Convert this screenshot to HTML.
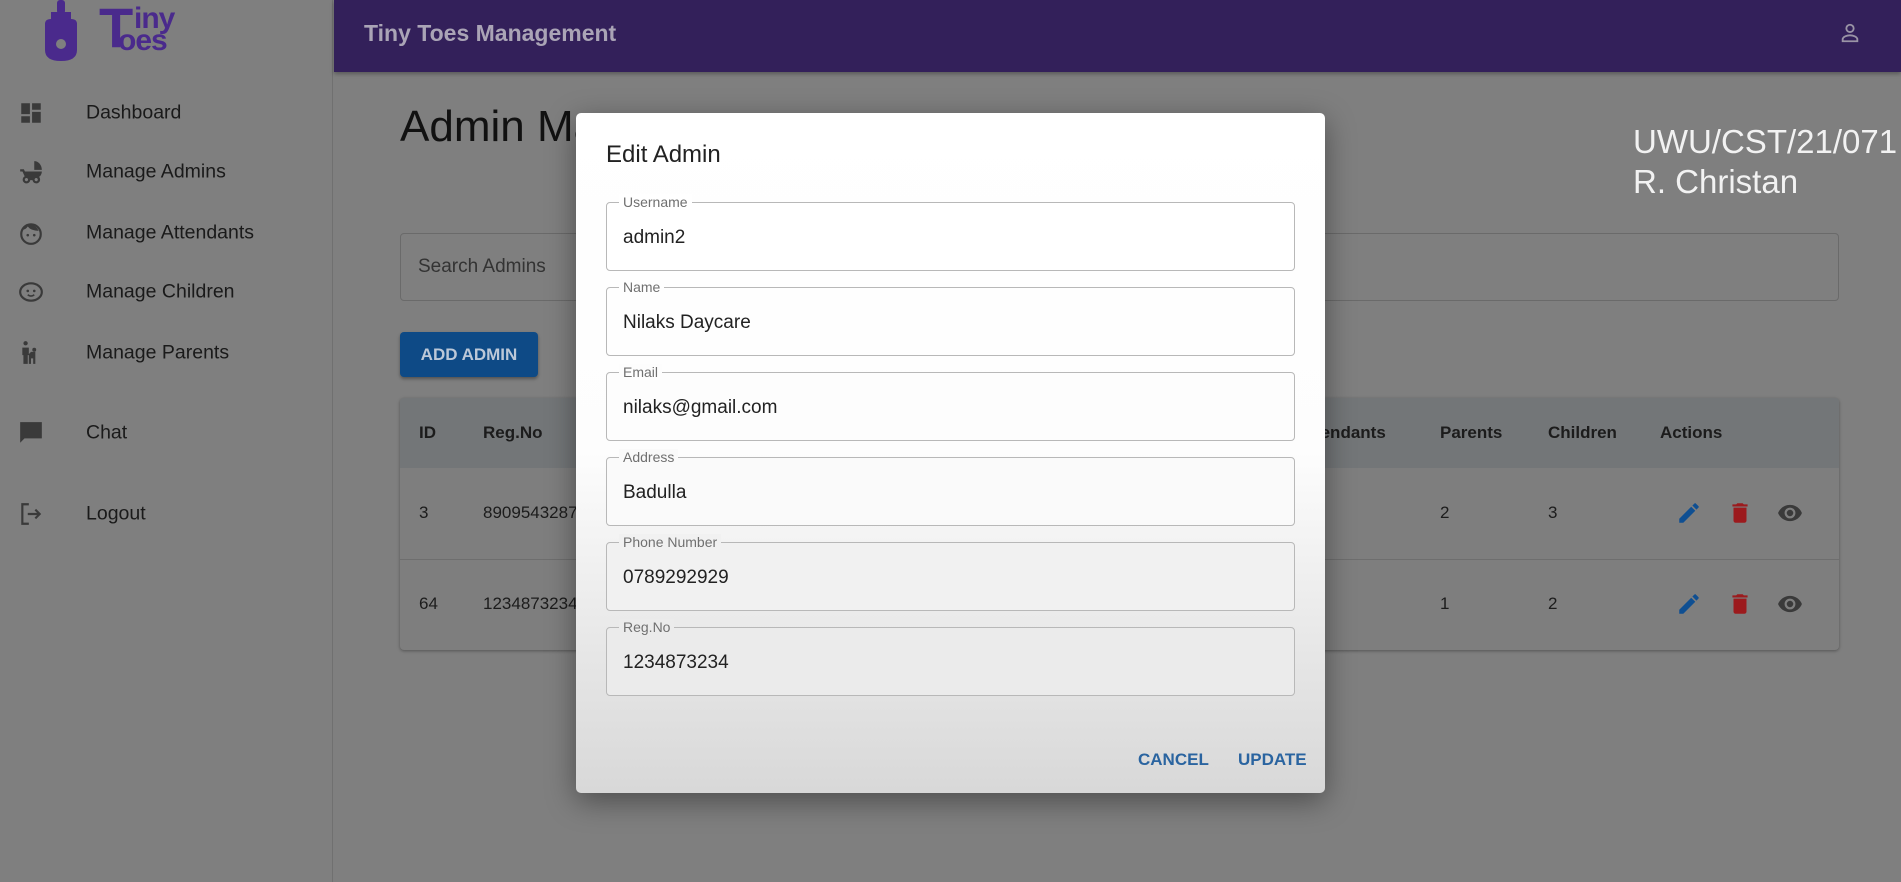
<!DOCTYPE html>
<html><head><meta charset="utf-8"><style>
*{margin:0;padding:0;box-sizing:border-box}
body{width:1901px;height:882px;overflow:hidden;background:#7f7f7f;font-family:"Liberation Sans",sans-serif;position:relative;color:#1c1c1c}
.abs{position:absolute}
.side{left:0;top:0;width:333px;height:882px;background:#7f7f7f;border-right:1px solid #707070}
.nav{position:absolute;left:86px;font-size:19.5px;color:#1a1a1a;transform:translateY(-50%)}
.ic{position:absolute;left:18px;width:26px;height:26px;transform:translateY(-50%)}
.hdr{left:334px;top:0;width:1567px;height:72px;background:#33205a;box-shadow:0 2px 4px rgba(0,0,0,.3)}
.th,.td{position:absolute;font-size:17px;transform:translateY(-50%)}
.th{font-weight:bold;color:#1c1c1c}
.field{position:absolute;left:30px;width:689px;height:69px;border:1px solid #b8b8b8;border-radius:4px}
.field .lb{position:absolute;left:12px;top:-9px;font-size:14px;color:#707070;background:inherit;padding:0 4px;line-height:16px}
.field .v{position:absolute;left:16px;top:24px;font-size:19px;color:#222}
</style></head><body>
<div class="abs side">
  <svg class="abs" style="left:40px;top:0" width="42" height="62" viewBox="0 0 42 62"><rect x="17" y="0" width="8" height="14" rx="3" fill="#4a2a8c"/><rect x="11" y="12" width="20" height="8" fill="#4a2a8c"/><path d="M5 24 Q5 19 11 19 H31 Q37 19 37 24 V50 Q37 61 21 61 Q5 61 5 50Z" fill="#4a2a8c"/><circle cx="21" cy="44" r="5" fill="#7f7f7f"/></svg>
  <div class="abs" style="left:99px;top:0px;font-size:56px;font-weight:bold;color:#4a2a8c;line-height:56px;letter-spacing:-2px">T</div>
  <div class="abs" style="left:134px;top:4px;font-size:30px;font-weight:bold;color:#4a2a8c;line-height:30px;letter-spacing:-1px">iny</div>
  <div class="abs" style="left:118px;top:26px;font-size:30px;font-weight:bold;color:#4a2a8c;line-height:30px;letter-spacing:-1px">oes</div>
  <svg class="ic" style="top:113px" viewBox="0 0 24 24"><path d="M3 13h8V3H3zm0 8h8v-6H3zm10 0h8V11h-8zm0-18v6h8V3z" fill="#3a3a3a"/></svg>
  <div class="nav" style="top:113px">Dashboard</div>
  <svg class="ic" style="top:172px" viewBox="0 0 24 24"><path d="M15 2v8h7c0-4.4-3.1-8-7-8zm5.3 13.9C21.4 14.6 22 13.1 22 11.5H6.4l-1-2H2v2h2.1s1.9 4 2.1 4.4c-1.1.6-1.9 1.8-1.9 3.1 0 1.9 1.6 3.5 3.5 3.5 1.8 0 3.2-1.2 3.5-3h2.1c.3 1.7 1.700 3 3.5 3 1.9 0 3.5-1.6 3.5-3.5 0-1-.4-1.9-1-2.6zM7.8 20.5c-.8 0-1.5-.7-1.5-1.5s.7-1.5 1.5-1.5 1.5.7 1.5 1.5-.7 1.5-1.5 1.5zm9 0c-.8 0-1.5-.7-1.5-1.5s.7-1.5 1.5-1.5 1.5.7 1.5 1.5-.7 1.5-1.5 1.5z" fill="#3a3a3a"/></svg>
  <div class="nav" style="top:172px">Manage Admins</div>
  <svg class="ic" style="top:233px" viewBox="0 0 24 24"><circle cx="12" cy="13" r="9" fill="none" stroke="#3a3a3a" stroke-width="2"/><path d="M4 9 Q6 3 12 4 Q17 5 19 10 Q12 10 9 6 Q7 9 4 9z" fill="#3a3a3a"/><circle cx="9" cy="14" r="1.2" fill="#3a3a3a"/><circle cx="15" cy="14" r="1.2" fill="#3a3a3a"/></svg>
  <div class="nav" style="top:233px">Manage Attendants</div>
  <svg class="ic" style="top:292px" viewBox="0 0 24 24"><ellipse cx="12" cy="12" rx="10" ry="8" fill="none" stroke="#3a3a3a" stroke-width="2"/><circle cx="9" cy="11" r="1.2" fill="#3a3a3a"/><circle cx="15" cy="11" r="1.2" fill="#3a3a3a"/><path d="M9 14.5q3 2.5 6 0" fill="none" stroke="#3a3a3a" stroke-width="1.5"/></svg>
  <div class="nav" style="top:292px">Manage Children</div>
  <svg class="ic" style="top:353px" viewBox="0 0 24 24"><circle cx="7" cy="3" r="2" fill="#3a3a3a"/><path d="M4 7h6v6l2-2h4v11h-2v-5h-2v5h-2V14H9v8H5V14H4z" fill="#3a3a3a"/><circle cx="15" cy="9" r="1.8" fill="#3a3a3a"/></svg>
  <div class="nav" style="top:353px">Manage Parents</div>
  <svg class="ic" style="top:433px" viewBox="0 0 24 24"><path d="M2 2h20v15H6l-4 4z" fill="#3a3a3a"/></svg>
  <div class="nav" style="top:433px">Chat</div>
  <svg class="ic" style="top:514px" viewBox="0 0 24 24"><path d="M10 3H4v18h6M9 12h11M16 8l4 4-4 4" fill="none" stroke="#3a3a3a" stroke-width="2"/></svg>
  <div class="nav" style="top:514px">Logout</div>
</div>
<div class="abs hdr">
  <div class="abs" style="left:30px;top:20px;font-size:23px;font-weight:bold;color:#aaa4b6">Tiny Toes Management</div>
  <svg class="abs" style="left:1505px;top:22px" width="22" height="22" viewBox="0 0 24 24"><circle cx="12" cy="7" r="4" fill="none" stroke="#9a94a6" stroke-width="2"/><path d="M4 21v-2c0-3 5-4.5 8-4.5s8 1.5 8 4.5v2z" fill="none" stroke="#9a94a6" stroke-width="2"/></svg>
</div>
<div class="abs" style="left:400px;top:102px;font-size:44px;color:#111">Admin Management</div>
<div class="abs" style="left:1633px;top:122px;font-size:33px;color:#f2f2f2;line-height:40px">UWU/CST/21/071<br>R. Christan</div>
<div class="abs" style="left:400px;top:233px;width:1439px;height:68px;border:1px solid #6a6a6a;border-radius:4px"><div class="abs" style="left:17px;top:22px;font-size:19px;color:#333">Search Admins</div></div>
<div class="abs" style="left:400px;top:332px;width:138px;height:45px;background:#0e4a86;border-radius:4px;box-shadow:0 2px 3px rgba(0,0,0,.35);color:#bcc8d8;font-size:17px;font-weight:bold;text-align:center;line-height:45px">ADD ADMIN</div>
<div class="abs" style="left:400px;top:398px;width:1439px;height:252px;background:#7e7e7e;border-radius:4px;box-shadow:0 1px 3px rgba(0,0,0,.35);overflow:hidden">
  <div class="abs" style="left:0;top:0;width:100%;height:70px;background:#737678"></div>
  <div class="abs" style="left:0;top:161px;width:100%;height:1px;background:#6e6e6e"></div>
  <div class="th" style="left:19px;top:35px">ID</div><div class="th" style="left:83px;top:35px">Reg.No</div>
  <div class="th" style="left:897px;top:35px">Attendants</div>
  <div class="th" style="left:1040px;top:35px">Parents</div><div class="th" style="left:1148px;top:35px">Children</div><div class="th" style="left:1260px;top:35px">Actions</div>
  <div class="td" style="left:19px;top:115px">3</div><div class="td" style="left:83px;top:115px">8909543287</div><div class="td" style="left:1040px;top:115px">2</div><div class="td" style="left:1148px;top:115px">3</div>
  <div class="td" style="left:19px;top:206px">64</div><div class="td" style="left:83px;top:206px">1234873234</div><div class="td" style="left:1040px;top:206px">1</div><div class="td" style="left:1148px;top:206px">2</div>
  <svg class="abs" style="left:1276px;top:102px" width="26" height="26" viewBox="0 0 24 24"><path d="M3 17.25V21h3.75L17.8 9.94l-3.75-3.75zM20.7 7.04a1 1 0 0 0 0-1.41l-2.34-2.34a1 1 0 0 0-1.41 0l-1.83 1.83 3.75 3.75z" fill="#0f4f92"/></svg>
  <svg class="abs" style="left:1327px;top:102px" width="26" height="26" viewBox="0 0 24 24"><path d="M6 19c0 1.1.9 2 2 2h8c1.1 0 2-.9 2-2V7H6zM19 4h-3.5l-1-1h-5l-1 1H5v2h14z" fill="#9c1a1d"/></svg>
  <svg class="abs" style="left:1376px;top:102px" width="28" height="26" viewBox="0 0 24 24"><path d="M12 4.5C7 4.5 2.7 7.6 1 12c1.7 4.4 6 7.5 11 7.5s9.3-3.1 11-7.5c-1.7-4.4-6-7.5-11-7.5zM12 17a5 5 0 1 1 0-10 5 5 0 0 1 0 10zm0-8a3 3 0 1 0 0 6 3 3 0 0 0 0-6z" fill="#3a3a3a"/></svg>
  <svg class="abs" style="left:1276px;top:193px" width="26" height="26" viewBox="0 0 24 24"><path d="M3 17.25V21h3.75L17.8 9.94l-3.75-3.75zM20.7 7.04a1 1 0 0 0 0-1.41l-2.34-2.34a1 1 0 0 0-1.41 0l-1.83 1.83 3.75 3.75z" fill="#0f4f92"/></svg>
  <svg class="abs" style="left:1327px;top:193px" width="26" height="26" viewBox="0 0 24 24"><path d="M6 19c0 1.1.9 2 2 2h8c1.1 0 2-.9 2-2V7H6zM19 4h-3.5l-1-1h-5l-1 1H5v2h14z" fill="#9c1a1d"/></svg>
  <svg class="abs" style="left:1376px;top:193px" width="28" height="26" viewBox="0 0 24 24"><path d="M12 4.5C7 4.5 2.7 7.6 1 12c1.7 4.4 6 7.5 11 7.5s9.3-3.1 11-7.5c-1.7-4.4-6-7.5-11-7.5zM12 17a5 5 0 1 1 0-10 5 5 0 0 1 0 10zm0-8a3 3 0 1 0 0 6 3 3 0 0 0 0-6z" fill="#3a3a3a"/></svg>
</div>
<div class="abs" style="left:576px;top:113px;width:749px;height:680px;border-radius:5px;background:linear-gradient(#fff 0%,#fdfdfd 50%,#e6e6e6 80%,#d8d8d8 100%);box-shadow:0 8px 30px rgba(0,0,0,.4)">
  <div class="abs" style="left:30px;top:28px;font-size:24px;color:#222">Edit Admin</div>
  <div class="field" style="top:89px;background:#fff"><span class="lb">Username</span><div class="v">admin2</div></div>
  <div class="field" style="top:174px;background:#fefefe"><span class="lb">Name</span><div class="v">Nilaks Daycare</div></div>
  <div class="field" style="top:259px;background:#fdfdfd"><span class="lb">Email</span><div class="v">nilaks@gmail.com</div></div>
  <div class="field" style="top:344px;background:#fafafa"><span class="lb">Address</span><div class="v">Badulla</div></div>
  <div class="field" style="top:429px;background:#f1f1f1"><span class="lb">Phone Number</span><div class="v">0789292929</div></div>
  <div class="field" style="top:514px;background:#ebebeb"><span class="lb">Reg.No</span><div class="v">1234873234</div></div>
  <div class="abs" style="left:562px;top:637px;font-size:17px;font-weight:bold;color:#2a64a0">CANCEL</div>
  <div class="abs" style="left:662px;top:637px;font-size:17px;font-weight:bold;color:#2a64a0">UPDATE</div>
</div>
</body></html>
